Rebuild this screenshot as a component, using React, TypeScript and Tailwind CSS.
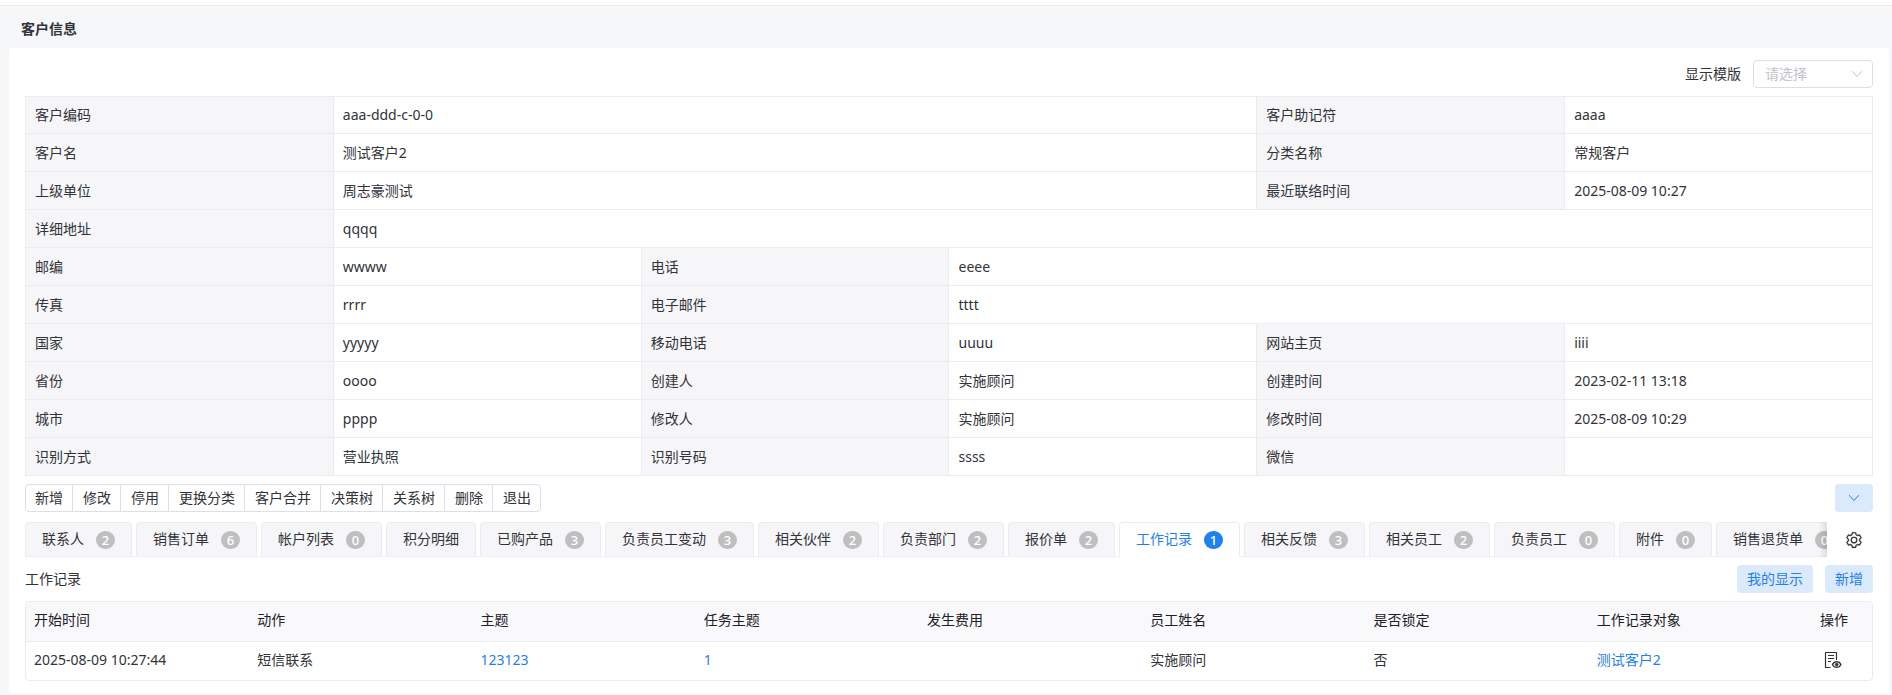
import { useState } from 'react';
import { clsx } from 'clsx';

type Field = {
  label: string;
  value: string;
  span?: number;
};

const customerRows: Field[][] = [
  [
    { label: '客户编码', value: 'aaa-ddd-c-0-0', span: 3 },
    { label: '客户助记符', value: 'aaaa' },
  ],
  [
    { label: '客户名', value: '测试客户2', span: 3 },
    { label: '分类名称', value: '常规客户' },
  ],
  [
    { label: '上级单位', value: '周志豪测试', span: 3 },
    { label: '最近联络时间', value: '2025-08-09 10:27' },
  ],
  [{ label: '详细地址', value: 'qqqq', span: 5 }],
  [
    { label: '邮编', value: 'wwww' },
    { label: '电话', value: 'eeee', span: 3 },
  ],
  [
    { label: '传真', value: 'rrrr' },
    { label: '电子邮件', value: 'tttt', span: 3 },
  ],
  [
    { label: '国家', value: 'yyyyy' },
    { label: '移动电话', value: 'uuuu' },
    { label: '网站主页', value: 'iiii' },
  ],
  [
    { label: '省份', value: 'oooo' },
    { label: '创建人', value: '实施顾问' },
    { label: '创建时间', value: '2023-02-11 13:18' },
  ],
  [
    { label: '城市', value: 'pppp' },
    { label: '修改人', value: '实施顾问' },
    { label: '修改时间', value: '2025-08-09 10:29' },
  ],
  [
    { label: '识别方式', value: '营业执照' },
    { label: '识别号码', value: 'ssss' },
    { label: '微信', value: '' },
  ],
];

const actions = ['新增', '修改', '停用', '更换分类', '客户合并', '决策树', '关系树', '删除', '退出'];

const tabs: { name: string; count?: number }[] = [
  { name: '联系人', count: 2 },
  { name: '销售订单', count: 6 },
  { name: '帐户列表', count: 0 },
  { name: '积分明细' },
  { name: '已购产品', count: 3 },
  { name: '负责员工变动', count: 3 },
  { name: '相关伙伴', count: 2 },
  { name: '负责部门', count: 2 },
  { name: '报价单', count: 2 },
  { name: '工作记录', count: 1 },
  { name: '相关反馈', count: 3 },
  { name: '相关员工', count: 2 },
  { name: '负责员工', count: 0 },
  { name: '附件', count: 0 },
  { name: '销售退货单', count: 0 },
];

const columns = ['开始时间', '动作', '主题', '任务主题', '发生费用', '员工姓名', '是否锁定', '工作记录对象'];

function ChevronDown({ className }: { className?: string }) {
  return (
    <svg viewBox="0 0 12 12" className={className} fill="none" stroke="currentColor" strokeLinecap="round" strokeLinejoin="round" aria-hidden="true">
      <path d="M1.5 3.5 6 8.5l4.5-5" />
    </svg>
  );
}

function GearIcon() {
  return (
    <svg viewBox="0 0 1024 1024" className="size-[18px]" fill="currentColor" stroke="currentColor" strokeWidth="12" aria-hidden="true">
      <path d="M600.704 64a32 32 0 0 1 30.464 22.208l35.2 109.376c14.784 7.232 28.928 15.36 42.432 24.512l112.384-24.192a32 32 0 0 1 34.432 15.36L944.32 364.8a32 32 0 0 1-4.032 37.504l-77.12 85.12a357.12 357.12 0 0 1 0 49.024l77.12 85.248a32 32 0 0 1 4.032 37.504l-88.704 153.6a32 32 0 0 1-34.432 15.296L708.8 803.904c-13.44 9.088-27.648 17.28-42.368 24.512l-35.264 109.376A32 32 0 0 1 600.704 960H423.296a32 32 0 0 1-30.464-22.208L357.696 828.48a351.616 351.616 0 0 1-42.56-24.64l-112.32 24.256a32 32 0 0 1-34.432-15.36L79.68 659.2a32 32 0 0 1 4.032-37.504l77.12-85.248a357.12 357.12 0 0 1 0-48.896l-77.12-85.248A32 32 0 0 1 79.68 364.8l88.704-153.6a32 32 0 0 1 34.432-15.296l112.32 24.256c13.568-9.152 27.776-17.408 42.56-24.64l35.2-109.312A32 32 0 0 1 423.232 64H600.64zm-23.424 64H446.72l-36.352 113.088-24.512 11.968a294.113 294.113 0 0 0-34.816 20.096l-22.656 15.36-116.224-25.088-65.28 113.152 79.68 88.192-1.92 27.136a293.12 293.12 0 0 0 0 40.192l1.92 27.136-79.808 88.192 65.344 113.152 116.224-25.024 22.656 15.296a294.113 294.113 0 0 0 34.816 20.096l24.512 11.968L446.72 896h130.688l36.48-113.152 24.448-11.904a288.282 288.282 0 0 0 34.752-20.096l22.592-15.296 116.288 25.024 65.28-113.152-79.744-88.192 1.92-27.136a293.12 293.12 0 0 0 0-40.256l-1.92-27.136 79.808-88.128-65.344-113.152-116.288 24.96-22.592-15.232a287.616 287.616 0 0 0-34.752-20.096l-24.448-11.904L577.344 128zM512 320a192 192 0 1 1 0 384 192 192 0 0 1 0-384m0 64a128 128 0 1 0 0 256 128 128 0 0 0 0-256" />
    </svg>
  );
}

function DocViewIcon() {
  return (
    <svg viewBox="0 0 18 18" className="size-[18px]" fill="none" stroke="currentColor" aria-hidden="true">
      <path d="M6.5 16.5h-5v-15h11V9" strokeWidth="1.2" strokeLinejoin="round" />
      <path d="M4 4.500h6M4 7.500h6M4 10.500h3" strokeWidth="1.2" />
      <path d="M8.500 13.500c1-2 2.400-2.900 4.200-2.900s3.200.9 4.200 2.900c-1 2-2.400 2.900-4.200 2.900s-3.200-.9-4.200-2.900Z" strokeWidth="1.4" />
      <circle cx="12.700" cy="13.500" r="1.300" fill="currentColor" strokeWidth="1" />
    </svg>
  );
}

function CustomerDetail() {
  return (
    <table className="w-full table-fixed border-collapse border border-[#e6e7ea]">
      <tbody>
        {customerRows.map((row, index) => (
          <tr key={index} className="h-[38px] first:h-[37px]">
            {row.map((field) => [
              <th
                key={field.label}
                scope="row"
                className="border border-[#ebecef] bg-[#f6f6f9] px-[9px] text-left font-normal"
              >
                {field.label}
              </th>,
              <td key={field.label + '-value'} colSpan={field.span ?? 1} className="border border-[#ebecef] px-[9px]">
                {field.value}
              </td>,
            ])}
          </tr>
        ))}
      </tbody>
    </table>
  );
}

function TabBar({ active, onChange }: { active: string; onChange: (name: string) => void }) {
  return (
    <div className="mt-[10px] flex h-[35px]">
      <div className="relative min-w-0 flex-1 overflow-hidden">
        <div role="tablist" className="flex h-full gap-1 border-b border-[#ebecf3]">
          {tabs.map((tab) => {
            const selected = tab.name === active;
            return (
              <button
                key={tab.name}
                type="button"
                role="tab"
                aria-selected={selected}
                onClick={() => onChange(tab.name)}
                className={clsx(
                  '-mb-px flex h-[35px] shrink-0 items-center gap-3 rounded-t border border-[#ebecf3] px-4 whitespace-nowrap',
                  selected ? 'border-b-white bg-white text-[#1f80f0]' : 'bg-[#f6f6f9]'
                )}
              >
                <span className="pb-0.5">{tab.name}</span>
                {tab.count !== undefined && (
                  <span
                    className={clsx(
                      'h-[18px] w-[19px] rounded-full text-center text-[13px] leading-[18px] font-medium text-white',
                      selected ? 'bg-[#1f80f0]' : 'bg-[#bfbfbf]'
                    )}
                  >
                    {tab.count}
                  </span>
                )}
              </button>
            );
          })}
        </div>
        {/* Fade over the tabs that run off the edge */}
        <div className="pointer-events-none absolute inset-y-0 right-0 w-2 bg-linear-to-r from-transparent to-black/10" />
      </div>
      <button type="button" aria-label="设置" className="flex w-[46px] shrink-0 items-center justify-center pl-2">
        <GearIcon />
      </button>
    </div>
  );
}

function WorkRecords() {
  return (
    <div className="mt-2 overflow-hidden rounded border border-[#ebecf3]">
      <table className="w-full table-fixed border-collapse">
        <thead>
          <tr className="h-[39px] border-b border-[#ebecf3] bg-[#f9f9fb] text-[#1d2026]">
            {columns.map((column) => (
              <th key={column} scope="col" className="px-2 pb-0.5 text-left font-normal">
                {column}
              </th>
            ))}
            <th scope="col" className="w-[60px] px-2 pb-0.5 text-left font-normal">
              操作
            </th>
          </tr>
        </thead>
        <tbody>
          <tr className="h-[39px]">
            <td className="px-2 pb-0.5">2025-08-09 10:27:44</td>
            <td className="px-2 pb-0.5">短信联系</td>
            <td className="px-2 pb-0.5">
              <a href="#" className="text-[#1f80f0]">123123</a>
            </td>
            <td className="px-2 pb-0.5">
              <a href="#" className="text-[#1f80f0]">1</a>
            </td>
            <td className="px-2 pb-0.5"></td>
            <td className="px-2 pb-0.5">实施顾问</td>
            <td className="px-2 pb-0.5">否</td>
            <td className="px-2 pb-0.5">
              <a href="#" className="text-[#1f80f0]">测试客户2</a>
            </td>
            <td className="px-2 pb-0.5">
              <button type="button" aria-label="查看" className="flex w-[26px] justify-center">
                <DocViewIcon />
              </button>
            </td>
          </tr>
        </tbody>
      </table>
    </div>
  );
}

export default function App() {
  const [active, setActive] = useState('工作记录');

  return (
    <div className="min-h-screen bg-[#f6f7f9] font-['Noto_Sans','Noto_Sans_CJK_SC',sans-serif] text-sm leading-5 text-[#303338]">
      <div className="h-[6px] border-b border-[#e8eaec] bg-white" />
      <h1 className="px-[21px] pt-[13px] pb-[9px] font-bold">客户信息</h1>

      <main className="mr-[3px] ml-[9px] rounded bg-white px-4 pt-3 pb-3">
        {/* Template picker */}
        <div className="mb-2 flex h-7 items-center justify-end gap-3">
          <label htmlFor="template">显示模版</label>
          <div className="relative">
            <select
              id="template"
              defaultValue=""
              className="block h-7 w-[120px] appearance-none rounded border border-[#dcdfe6] bg-white px-[11px] text-[#bfc3ca]"
            >
              <option value="">请选择</option>
            </select>
            <ChevronDown className="pointer-events-none absolute top-2 right-[10px] size-3 text-[#bfc3ca]" />
          </div>
        </div>

        <CustomerDetail />

        {/* Action bar */}
        <div className="mt-2 flex items-center justify-between">
          <div className="flex h-7 divide-x divide-[#dcdfe6] rounded border border-[#dcdfe6]">
            {actions.map((action) => (
              <button key={action} type="button" className="pr-[9px] pl-[9px] not-first:pl-[10px]">
                {action}
              </button>
            ))}
          </div>
          <button
            type="button"
            aria-label="展开"
            className="flex h-7 w-[38px] items-center justify-center rounded bg-[#dbe9fd] text-[#1f80f0]"
          >
            <ChevronDown className="size-3" />
          </button>
        </div>

        <TabBar active={active} onChange={setActive} />

        <div className="mt-2 flex items-center justify-between">
          <h2>{active}</h2>
          <div className="flex gap-3">
            <button type="button" className="h-7 rounded bg-[#dbe9fd] px-[10px] text-[#1f80f0]">
              我的显示
            </button>
            <button type="button" className="h-7 rounded bg-[#dbe9fd] px-[10px] text-[#1f80f0]">
              新增
            </button>
          </div>
        </div>

        <WorkRecords />
      </main>
    </div>
  );
}
